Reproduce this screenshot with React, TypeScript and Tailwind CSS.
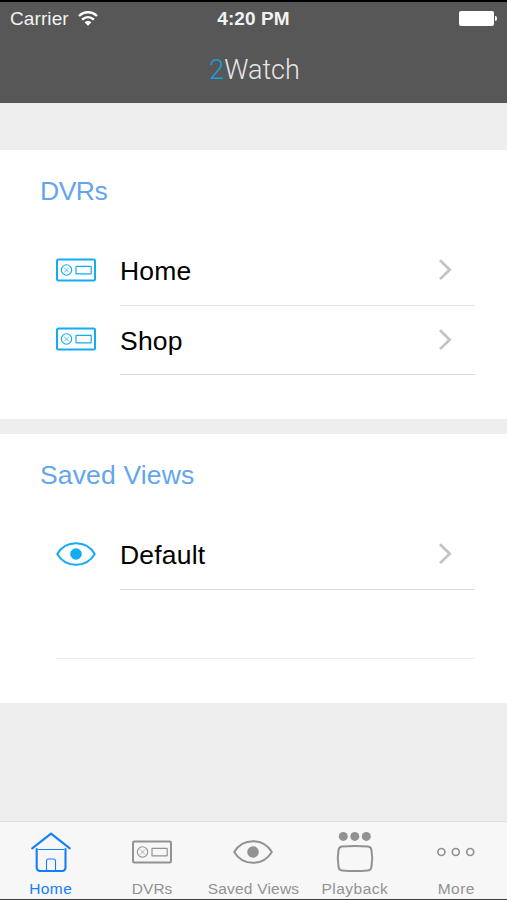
import type { ReactNode } from "react";
import clsx from "clsx";

type IconProps = { className?: string };

function DvrIcon({ className }: IconProps) {
  return (
    <svg width="40" height="24" viewBox="0 0 40 24" fill="none" stroke="currentColor" className={className}>
      <rect x="1" y="1.5" width="38" height="21" rx="1.5" strokeWidth="2" />
      <circle cx="10.5" cy="12" r="5.2" strokeWidth="1.1" />
      <path d="M8 9.5l5 5M13 9.5l-5 5" strokeWidth="0.9" strokeOpacity="0.8" />
      <rect x="20" y="8.3" width="15.2" height="7.6" rx="0.5" strokeWidth="1.2" />
    </svg>
  );
}

function EyeIcon({ className }: IconProps) {
  return (
    <svg width="40" height="24" viewBox="0 0 40 24" fill="none" stroke="currentColor" className={className}>
      <path d="M1.2 12C5.5 4.8 12 1.2 20 1.2S34.5 4.8 38.8 12C34.5 19.2 28 22.8 20 22.8S5.5 19.2 1.2 12z" strokeWidth="2" strokeLinejoin="round" />
      <circle cx="20" cy="12" r="5.8" fill="currentColor" stroke="none" />
    </svg>
  );
}

function HomeIcon() {
  return (
    <svg width="42" height="42" viewBox="0 0 42 42" fill="none" stroke="currentColor" strokeLinecap="round">
      <path d="M2.2 17.3L21 2.6l18.8 14.7" strokeWidth="2.1" />
      <path d="M6.7 18v18.8a3.2 3.2 0 0 0 3.2 3.2h22.4a3.2 3.2 0 0 0 3.2-3.2V18" strokeWidth="2.1" />
      <path d="M8.5 18.5h25" strokeWidth="1" />
      <path d="M16.5 39.5V30a2 2 0 0 1 2-2h5a2 2 0 0 1 2 2v9.5" strokeWidth="1.1" />
    </svg>
  );
}

function PlaybackIcon() {
  return (
    <svg width="42" height="42" viewBox="0 0 42 42" fill="none" stroke="currentColor">
      <g fill="currentColor" stroke="none">
        <circle cx="9.3" cy="5.4" r="4.5" />
        <circle cx="20.8" cy="5.4" r="4.5" />
        <circle cx="32.3" cy="5.4" r="4.5" />
      </g>
      <path d="M8 15.5Q21 14.3 34 15.5Q37 15.8 37.4 18.8Q39.2 27.5 37.4 36.2Q37 39.2 34 39.4Q21 40.6 8 39.4Q5 39.2 4.6 36.2Q2.8 27.5 4.6 18.8Q5 15.8 8 15.5z" strokeWidth="2" />
    </svg>
  );
}

function MoreIcon() {
  return (
    <svg width="38" height="12" viewBox="0 0 38 12" fill="none" stroke="currentColor" strokeWidth="1.7">
      <circle cx="4.4" cy="6" r="3.5" />
      <circle cx="18.8" cy="6" r="3.5" />
      <circle cx="33.2" cy="6" r="3.5" />
    </svg>
  );
}

function WifiIcon() {
  return (
    <svg width="20" height="15" viewBox="0 0 20 15" fill="none" stroke="white" strokeWidth="2.4">
      <path d="M1 5C6.2 0 13.8 0 19 5" />
      <path d="M4.1 8.7C7.6 5.4 12.4 5.4 15.9 8.7" />
      <path d="M10 14.8L6.6 11.4c1.9-1.9 4.9-1.9 6.8 0z" fill="white" stroke="none" />
    </svg>
  );
}

function Battery() {
  return (
    <div className="flex items-center gap-px">
      <div className="h-[15px] w-[35px] rounded-[2px] bg-white" />
      <div className="h-[5px] w-[2px] rounded-r-full bg-white" />
    </div>
  );
}

function Chevron() {
  return (
    <svg width="14" height="22" viewBox="0 0 14 22" fill="none" stroke="#c3c3c6" strokeWidth="2.7">
      <path d="M1 1.3L10.7 10.7 1 20.1" />
    </svg>
  );
}

function Row({ icon, label, dark }: { icon: ReactNode; label: string; dark?: boolean }) {
  return (
    <div className="flex h-[69.5px] pl-14 pr-8">
      <div className="flex w-16 shrink-0 items-center pb-[2px] text-[#14abf4]">{icon}</div>
      <div
        className={clsx(
          "flex flex-1 items-center justify-between border-b-[1.5px] pr-[22.5px]",
          dark ? "border-[#dcdcde]" : "border-[#e8e8e8]"
        )}
      >
        <span className="pt-[1.5px] text-[26.5px] leading-8 tracking-[0.2px] text-black">{label}</span>
        <Chevron />
      </div>
    </div>
  );
}

function Section({ title, tracking, children }: { title: string; tracking: string; children: ReactNode }) {
  return (
    <section className="h-[269px] bg-white pt-[25px]">
      <h2 className={clsx("mb-[29px] pl-10 text-[26.5px] leading-8 text-[#64a5ee]", tracking)}>{title}</h2>
      {children}
    </section>
  );
}

const TABS = [
  { label: "Home", icon: <HomeIcon />, tracking: "tracking-[0.4px]", active: true },
  { label: "DVRs", icon: <DvrIcon />, tracking: "tracking-normal" },
  { label: "Saved Views", icon: <EyeIcon />, tracking: "tracking-[0.2px]" },
  { label: "Playback", icon: <PlaybackIcon />, tracking: "tracking-[0.5px]" },
  { label: "More", icon: <MoreIcon />, tracking: "tracking-[0.5px]" },
];

export default function App() {
  return (
    <div className="flex h-[900px] w-[507px] flex-col overflow-hidden border-b border-[#3c3c3e] bg-[#eeeeee] font-['Liberation_Sans',Arial,sans-serif]">
      <header className="h-[102.5px] shrink-0 border-t-2 border-black bg-[#575757]">
        <div className="grid h-8 grid-cols-3 items-center px-[10px] text-[19px] leading-6 text-[#f2f2f2]">
          <div className="flex items-center gap-[9px]">
            <span className="pt-[2px] tracking-[0.1px]">Carrier</span>
            <WifiIcon />
          </div>
          <span className="pt-[2px] text-center font-bold tracking-[0.1px]">4:20 PM</span>
          <div className="flex justify-end">
            <Battery />
          </div>
        </div>
        <h1 className="mt-5 pl-[2px] text-center font-[Roboto] text-[27px] font-light leading-8 text-[#e6e6e6]">
          <span className="text-[#1b9fd8]">2</span>Watch
        </h1>
      </header>

      <main className="flex flex-1 flex-col gap-[15px] pt-[47.5px]">
        <Section title="DVRs" tracking="tracking-[-0.5px]">
          <Row icon={<DvrIcon />} label="Home" />
          <Row icon={<DvrIcon />} label="Shop" dark />
        </Section>
        <Section title="Saved Views" tracking="tracking-[0.15px]">
          <Row icon={<EyeIcon />} label="Default" dark />
          <div className="ml-14 mr-8 h-[69.5px] border-b border-[#eeeeee]" />
        </Section>
      </main>

      <nav className="grid h-[78px] shrink-0 grid-cols-5 border-t border-[#dedede] bg-[#f7f7f7]">
        {TABS.map((tab) => (
          <div
            key={tab.label}
            className={clsx("flex flex-col items-center pt-[9px]", tab.active ? "text-[#147efb]" : "text-[#929292]")}
          >
            <div className="flex h-[42px] items-center">{tab.icon}</div>
            <span className={clsx("mt-1.5 whitespace-nowrap text-[15.5px] leading-5", tab.tracking)}>{tab.label}</span>
          </div>
        ))}
      </nav>
    </div>
  );
}
